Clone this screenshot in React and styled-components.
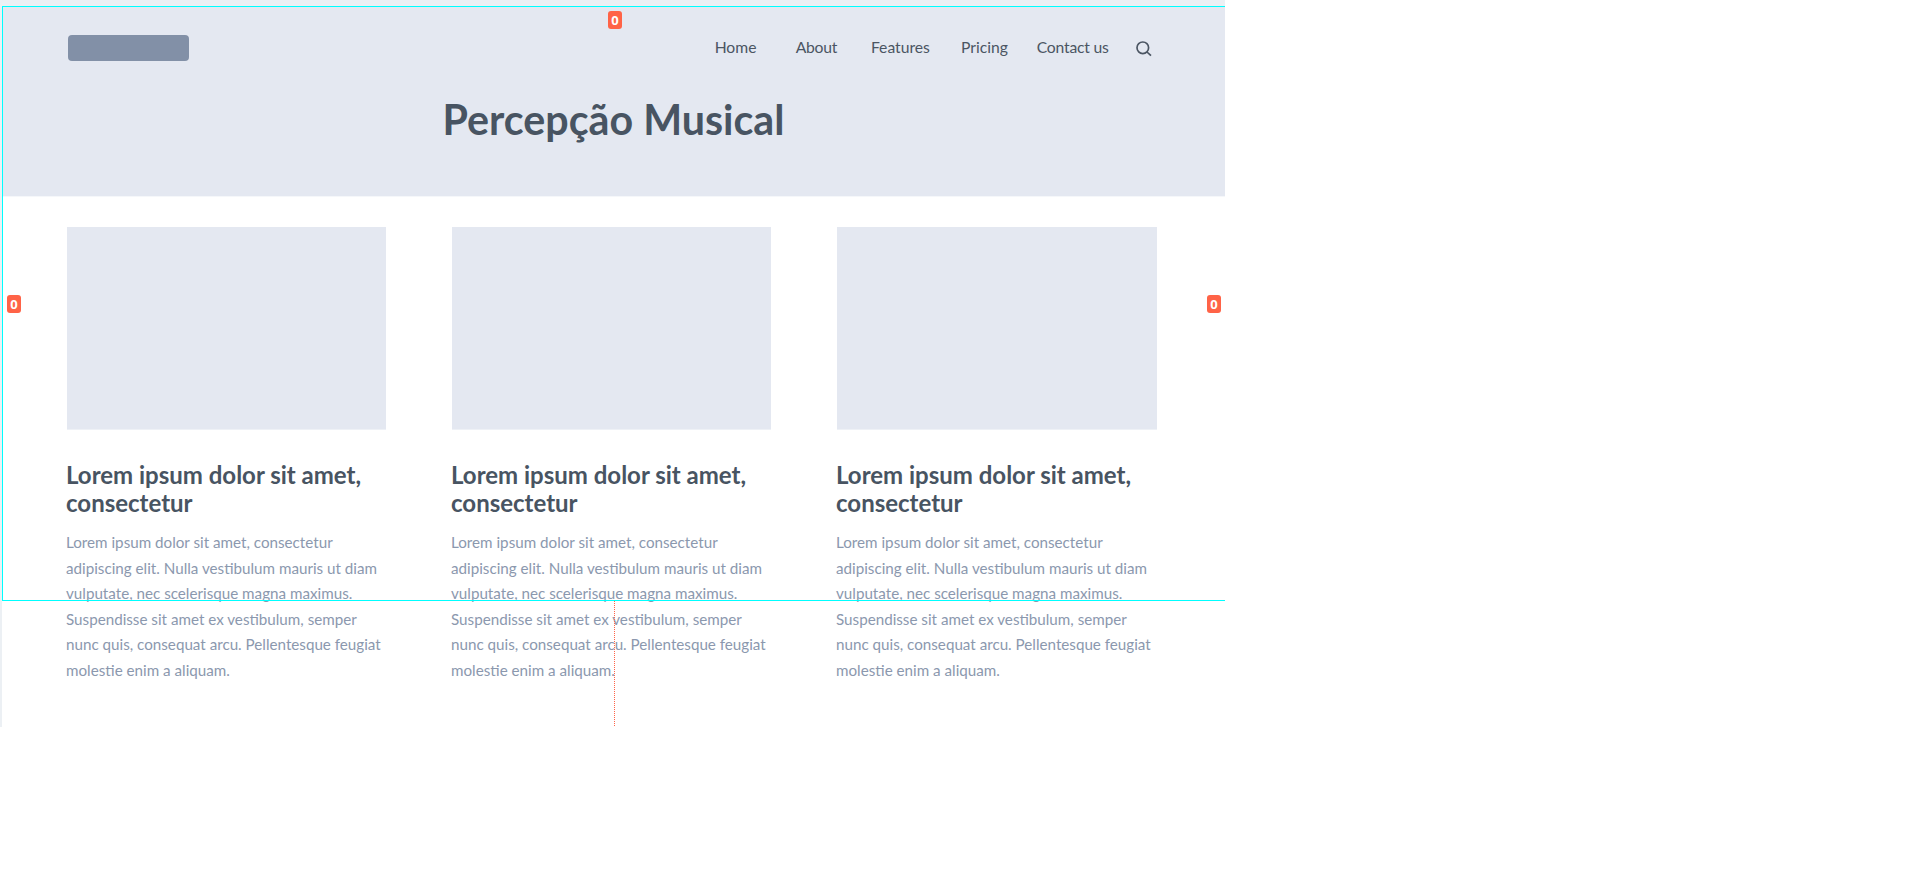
import React from 'react';
import styled, { createGlobalStyle } from 'styled-components';

const Global = createGlobalStyle`
  * { box-sizing: border-box; }
  body { margin: 0; background: #fff; font-family: Lato, sans-serif; }
  h1, h2, p { margin: 0; }
`;

const Workspace = styled.div`
  position: relative;
  width: 1225px;
  height: 727px;
  padding: 6px 0 0 2px;
  background: #ecf0f4;
  overflow: hidden;
`;

const Page = styled.div`
  height: 721px;
  background: #fff;
`;

const Header = styled.header`
  height: 191px;
  background: #e4e8f1;
  border-bottom: 1px solid #f5f7fa;
`;

const TopBar = styled.div`
  display: flex;
  justify-content: space-between;
  padding: 29px 73px 0 66px;
`;

const Logo = styled.div`
  width: 121px;
  height: 26px;
  border-radius: 4px;
  background: #8290a7;
`;

const Nav = styled.nav`
  display: grid;
  grid-template-columns: 81.2px 75.1px 90px 75.8px 99.3px 16px;
  padding-top: 2px;
  color: #4b5563;
`;

const NavLink = styled.span`
  font-size: 15.7px;
  line-height: 20px;
  white-space: nowrap;
  letter-spacing: ${(p) => p.$tracking || 0}px;
`;

const SearchIcon = styled.svg`
  display: block;
  width: 16px;
  height: 16px;
  margin-top: 4px;
`;

const Title = styled.h1`
  margin-top: 33px;
  padding-right: 0;
  font-size: 41.2px;
  line-height: 50px;
  font-weight: 700;
  text-align: center;
  color: #485462;
`;

const Columns = styled.main`
  display: grid;
  grid-template-columns: 319px 319px 320px;
  column-gap: 66px;
  padding: 30px 0 0 65px;
`;

const Card = styled.article`
  margin-left: ${(p) => p.$shift || 0}px;
`;

const Thumb = styled.div`
  height: 203px;
  background: #e4e8f1;
  border-bottom: 1px solid #eef1f6;
`;

const CardTitle = styled.h2`
  margin: 31px 0 0 -1px;
  font-size: 24px;
  line-height: 28px;
  font-weight: 700;
  color: #485462;
`;

const CardText = styled.p`
  margin: 13px -6px 0 -1px;
  font-size: 15.2px;
  line-height: 25.5px;
  color: #8b98ae;
`;

const Selection = styled.div`
  position: absolute;
  left: 2px;
  top: 6px;
  width: 1240px;
  height: 595px;
  border: 1px solid #00ffff;
`;

const Guide = styled.div`
  position: absolute;
  left: 614px;
  top: 601px;
  width: 1px;
  height: 125px;
  background: repeating-linear-gradient(to bottom, #ff6347 0 1px, transparent 1px 2px);
`;

const Badge = styled.span`
  position: absolute;
  left: ${(p) => p.$x}px;
  top: ${(p) => p.$y}px;
  width: 14px;
  height: 18px;
  border-radius: 3px;
  background: #ff6347;
  color: #fff;
  font: 700 13px/18px "Open Sans", sans-serif;
  text-align: center;
`;

const links = [
  { label: 'Home' },
  { label: 'About', tracking: -0.3 },
  { label: 'Features' },
  { label: 'Pricing' },
  { label: 'Contact us', tracking: -0.2 },
];

const lines = [
  'Lorem ipsum dolor sit amet, consectetur',
  'adipiscing elit. Nulla vestibulum mauris ut diam',
  'vulputate, nec scelerisque magna maximus.',
  'Suspendisse sit amet ex vestibulum, semper',
  'nunc quis, consequat arcu. Pellentesque feugiat',
  'molestie enim a aliquam.',
];

const Article = () => (
  <Card>
    <Thumb />
    <CardTitle>Lorem ipsum dolor sit amet, consectetur</CardTitle>
    <CardText>
      {lines.map((line) => (
        <React.Fragment key={line}>{line}<br /></React.Fragment>
      ))}
    </CardText>
  </Card>
);

export default function App() {
  return (
    <>
      <Global />
      <Workspace>
        <Page>
          <Header>
            <TopBar>
              <Logo />
              <Nav>
                {links.map((l) => (
                  <NavLink key={l.label} $tracking={l.tracking}>{l.label}</NavLink>
                ))}
                <SearchIcon viewBox="0 0 16 16" fill="none" stroke="#4b5563" strokeWidth="1.7">
                  <circle cx="6.8" cy="6.8" r="5.8" />
                  <path d="M11 11l4 3.7" />
                </SearchIcon>
              </Nav>
            </TopBar>
            <Title>Percepção Musical</Title>
          </Header>
          <Columns>
            <Article />
            <Article />
            <Article />
          </Columns>
        </Page>
        <Selection />
        <Guide />
        <Badge $x={608} $y={11}>0</Badge>
        <Badge $x={7} $y={295}>0</Badge>
        <Badge $x={1207} $y={295}>0</Badge>
      </Workspace>
    </>
  );
}
